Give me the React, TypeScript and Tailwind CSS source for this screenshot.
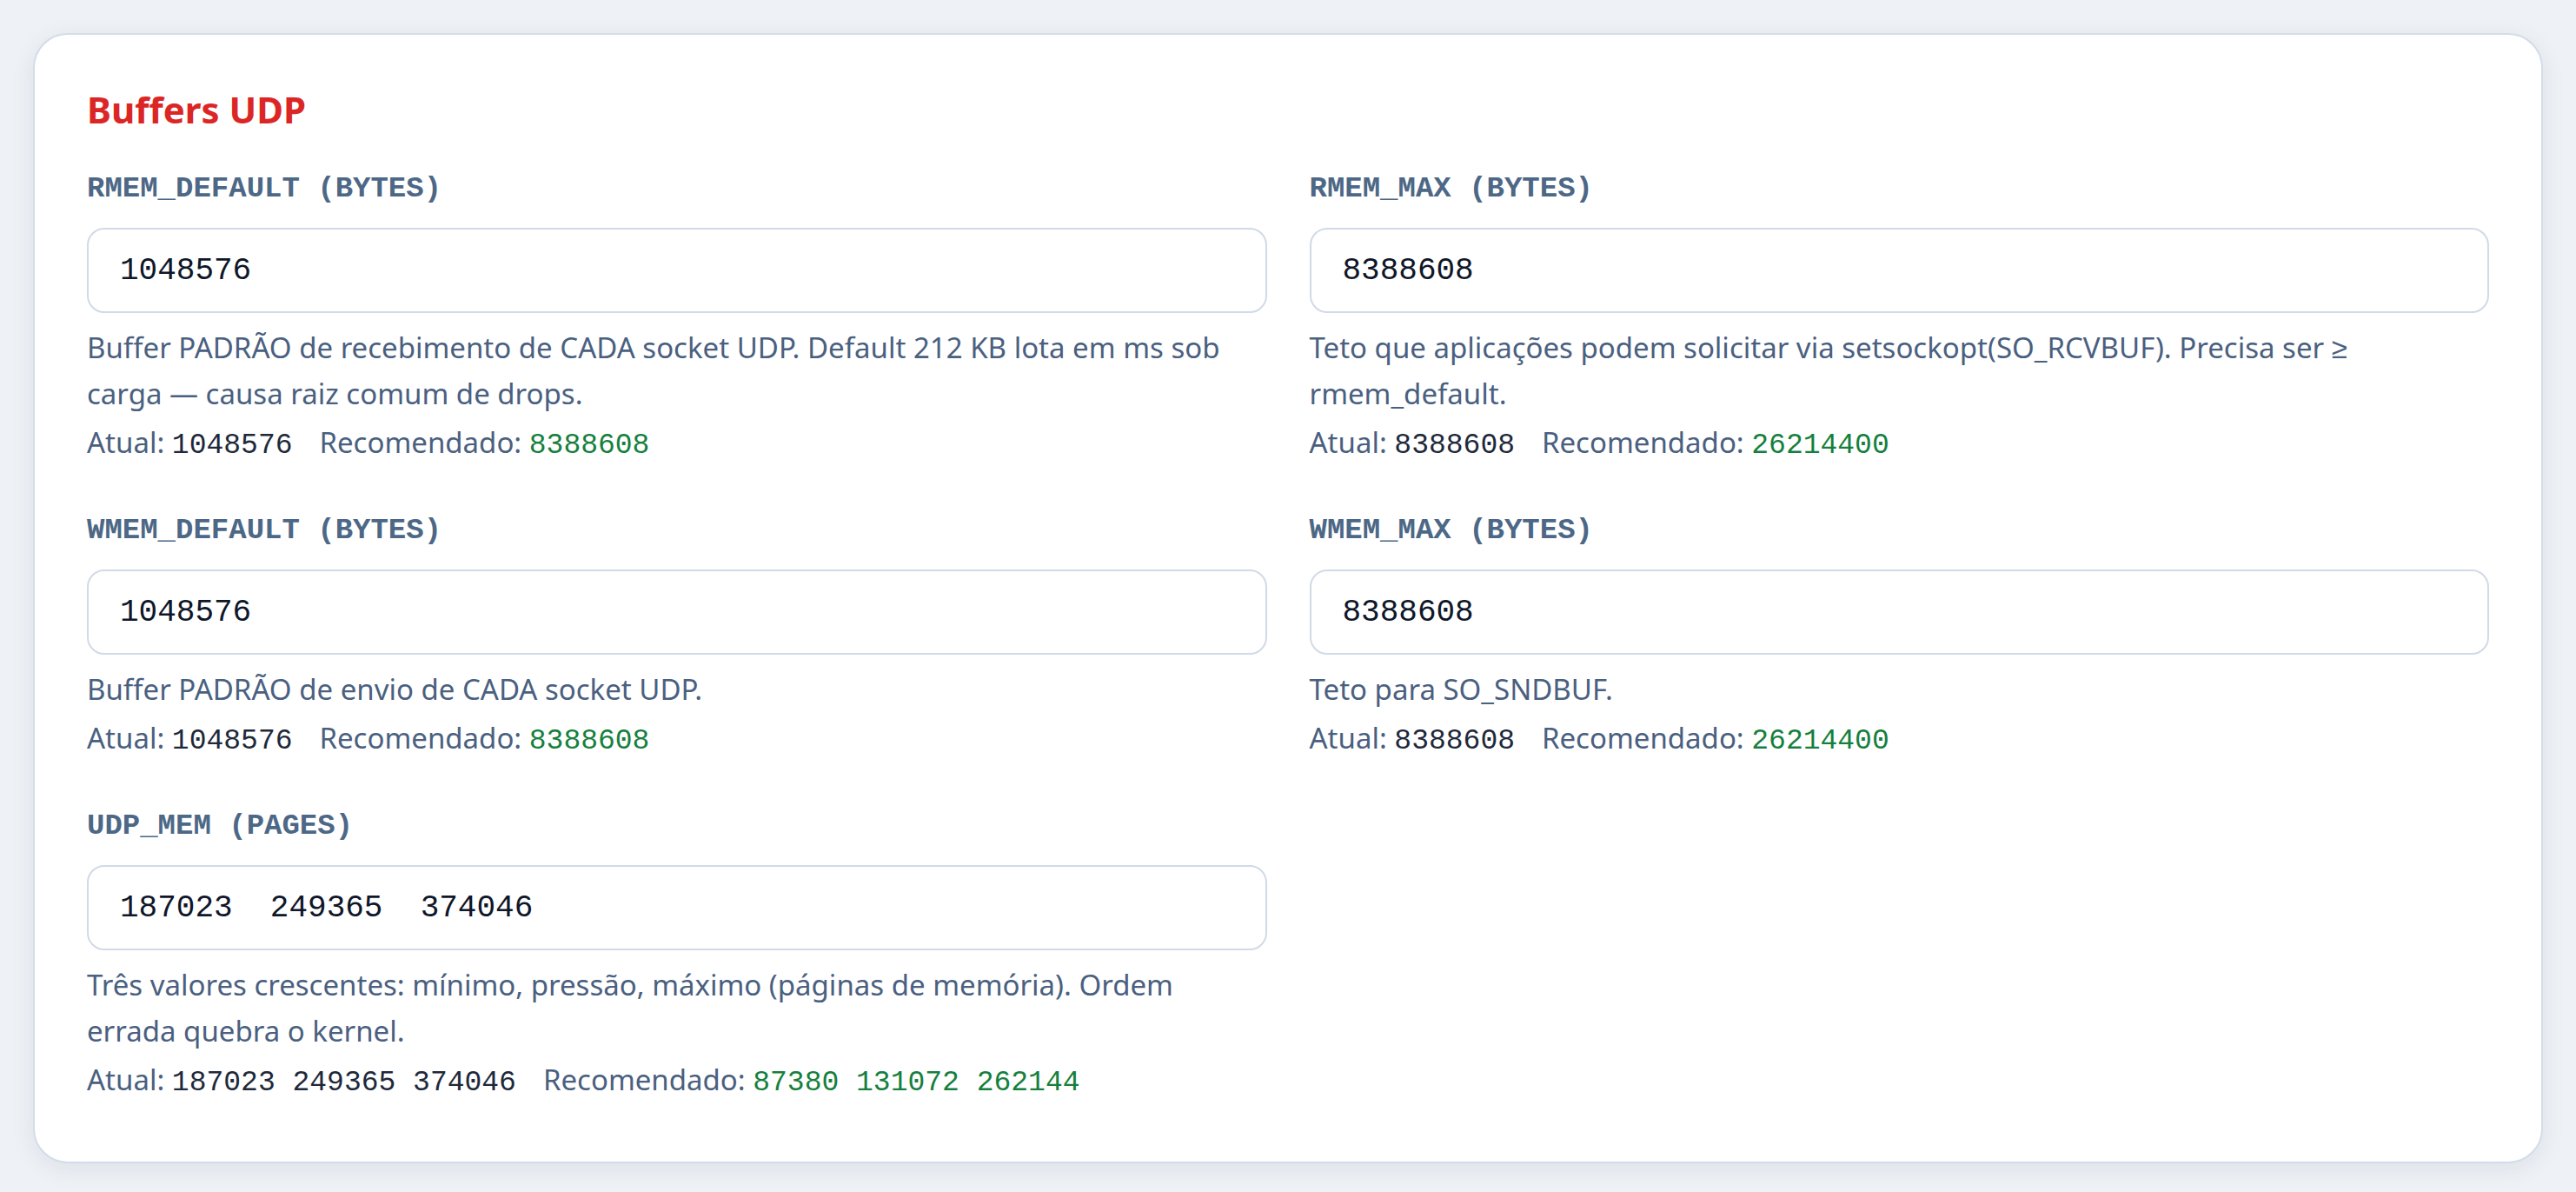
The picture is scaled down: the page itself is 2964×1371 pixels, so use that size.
import React from "react";

type Field = {
  label: string;
  value: string;
  desc: string;
  current: string;
  recommended: string;
};

const fields: Field[] = [
  {
    label: "rmem_default (bytes)",
    value: "1048576",
    desc: "Buffer PADRÃO de recebimento de CADA socket UDP. Default 212 KB lota em ms sob carga — causa raiz comum de drops.",
    current: "1048576",
    recommended: "8388608",
  },
  {
    label: "rmem_max (bytes)",
    value: "8388608",
    desc: "Teto que aplicações podem solicitar via setsockopt(SO_RCVBUF). Precisa ser ≥ rmem_default.",
    current: "8388608",
    recommended: "26214400",
  },
  {
    label: "wmem_default (bytes)",
    value: "1048576",
    desc: "Buffer PADRÃO de envio de CADA socket UDP.",
    current: "1048576",
    recommended: "8388608",
  },
  {
    label: "wmem_max (bytes)",
    value: "8388608",
    desc: "Teto para SO_SNDBUF.",
    current: "8388608",
    recommended: "26214400",
  },
  {
    label: "udp_mem (pages)",
    value: "187023  249365  374046",
    desc: "Três valores crescentes: mínimo, pressão, máximo (páginas de memória). Ordem errada quebra o kernel.",
    current: "187023 249365 374046",
    recommended: "87380 131072 262144",
  },
];

const mono = "font-['Liberation_Mono',monospace]";

function FieldBox({ f }: { f: Field }) {
  return (
    <div className="flex flex-col">
      <label className={`${mono} text-[34px] leading-[40px] font-bold uppercase text-[#4d6886]`}>
        {f.label}
      </label>
      <input
        readOnly
        value={f.value}
        className={`${mono} mt-[25px] h-[98px] w-full rounded-[20px] border-2 border-[#d1dae6] bg-white px-[36px] text-[36px] text-[#0f172a] outline-none`}
      />
      <p className="mt-[13px] text-[33px] leading-[53px] text-[#4a6080]">{f.desc}</p>
      <div className="mt-[3px] text-[33px] leading-[53px] text-[#4a6080]">
        Atual: <span className={`${mono} text-[33px] text-[#1e293b]`}>{f.current}</span>
        <span className="ml-[31px]">
          Recomendado: <span className={`${mono} text-[33px] text-[#15803d]`}>{f.recommended}</span>
        </span>
      </div>
    </div>
  );
}

export default function App() {
  return (
    <div className="min-h-screen bg-[#eef2f7] p-[38px] font-['Noto_Sans',sans-serif]">
      <div className="rounded-[40px] border-2 border-[#d3dce8] bg-white px-[60px] pt-[57px] pb-[64px] shadow-[0_6px_28px_rgba(15,23,42,0.08)]">
        <h2 className="text-[42px] leading-[58px] font-bold text-[#dc2626]">Buffers UDP</h2>
        <div className="mt-[42px] grid grid-cols-2 gap-x-[49px] gap-y-[51px]">
          {fields.map((f, i) => (
            <FieldBox key={i} f={f} />
          ))}
        </div>
      </div>
    </div>
  );
}
